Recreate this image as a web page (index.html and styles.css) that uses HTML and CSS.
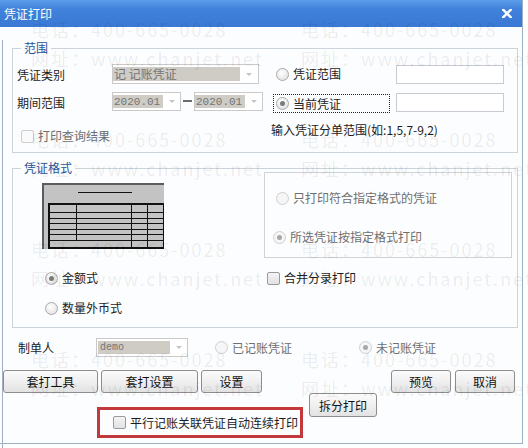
FILE: index.html
```html
<!DOCTYPE html>
<html lang="zh-CN">
<head>
    <meta charset="UTF-8">
    <title>凭证打印</title>
    <link rel="stylesheet" href="styles.css">
</head>
<body>
<div class="page">
    <div class="dialog">
        <div class="titlebar">
            <span class="title">凭证打印</span>
            <svg class="close" width="10" height="9" viewBox="0 0 10 9">
                <path d="M1 0.5 L9 8.5 M9 0.5 L1 8.5" stroke="#fff" stroke-width="2.4" stroke-linecap="square"/>
            </svg>
        </div>

        <div class="content">
            <fieldset class="group range">
                <legend>范围</legend>
                <div class="range-grid">
                    <span class="label">凭证类别</span>
                    <div class="select wide">
                        <span class="sel-text">记 记账凭证</span>
                        <span class="arrow"></span>
                    </div>
                    <div class="radio first"><span class="dot"></span>凭证范围</div>
                    <div class="input"></div>

                    <span class="label">期间范围</span>
                    <div class="dates">
                        <div class="select date">
                            <span class="sel-text mono">2020.01</span>
                            <span class="arrow"></span>
                        </div>
                        <span class="dash"></span>
                        <div class="select date">
                            <span class="sel-text mono">2020.01</span>
                            <span class="arrow"></span>
                        </div>
                    </div>
                    <div class="radio focus"><span class="dot checked"></span>当前凭证</div>
                    <div class="input"></div>

                    <div class="check disabled span2"><span class="box"></span>打印查询结果</div>
                    <span class="hint span2">输入凭证分单范围(如:1,5,7-9,2)</span>
                </div>
            </fieldset>

            <fieldset class="group format">
                <legend>凭证格式</legend>
                <div class="format-row">
                    <div class="format-left">
                        <div class="preview">
                            <div class="preview-title"></div>
                            <div class="preview-table">
                                <div class="pt-row"><span class="c1"></span><span class="c2"></span><span class="c3"></span><span class="c4"></span></div>
                                <div class="pt-row"><span class="c1"></span><span class="c2"></span><span class="c3"></span><span class="c4"></span></div>
                                <div class="pt-row"><span class="c1"></span><span class="c2"></span><span class="c3"></span><span class="c4"></span></div>
                                <div class="pt-row"><span class="c1"></span><span class="c2"></span><span class="c3"></span><span class="c4"></span></div>
                                <div class="pt-row"><span class="c1"></span><span class="c2"></span><span class="c3"></span><span class="c4"></span></div>
                                <div class="pt-row"><span class="c1"></span><span class="c2"></span><span class="c3"></span><span class="c4"></span></div>
                                <div class="pt-row last"><span class="c12"></span><span class="c3"></span><span class="c4"></span></div>
                            </div>
                        </div>
                        <div class="radio amount"><span class="dot checked"></span>金额式</div>
                        <div class="radio qty"><span class="dot"></span>数量外币式</div>
                    </div>
                    <div class="format-right">
                        <div class="inner-box">
                            <div class="radio disabled only"><span class="dot"></span>只打印符合指定格式的凭证</div>
                            <div class="radio disabled chosen"><span class="dot checked"></span>所选凭证按指定格式打印</div>
                        </div>
                        <div class="check merge"><span class="box"></span>合并分录打印</div>
                    </div>
                </div>
            </fieldset>

            <div class="maker-row">
                <span class="maker-label">制单人</span>
                <div class="select maker">
                    <span class="sel-text mono small">demo</span>
                    <span class="arrow"></span>
                </div>
                <div class="radio disabled posted"><span class="dot"></span>已记账凭证</div>
                <div class="radio disabled unposted"><span class="dot checked"></span>未记账凭证</div>
            </div>

            <div class="button-row">
                <button class="btn w95">套打工具</button>
                <button class="btn w97">套打设置</button>
                <button class="btn w61">设置</button>
                <span class="spacer"></span>
                <button class="btn w60">预览</button>
                <button class="btn w60">取消</button>
            </div>

            <div class="last-row">
                <div class="highlight">
                    <div class="check"><span class="box"></span>平行记账关联凭证自动连续打印</div>
                </div>
                <button class="btn split">拆分打印</button>
            </div>
        </div>
    </div>

    <!-- watermark from the screenshot -->
    <div class="watermark">
        <div class="wm"><p>电话：400-665-0028</p><p>网址：www.chanjet.net</p></div>
        <div class="wm"><p>电话：400-665-0028</p><p>网址：www.chanjet.net</p></div>
        <div class="wm"><p>电话：400-665-0028</p><p>网址：www.chanjet.net</p></div>
        <div class="wm"><p>电话：400-665-0028</p><p>网址：www.chanjet.net</p></div>
        <div class="wm"><p>电话：400-665-0028</p><p>网址：www.chanjet.net</p></div>
        <div class="wm"><p>电话：400-665-0028</p><p>网址：www.chanjet.net</p></div>
        <div class="wm"><p>电话：400-665-0028</p><p>网址：www.chanjet.net</p></div>
        <div class="wm"><p>电话：400-665-0028</p><p>网址：www.chanjet.net</p></div>
    </div>
</div>
</body>
</html>
```

FILE: styles.css
```css
html, body {
    margin: 0;
    padding: 0;
    background-color: #ffffff;
    font-family: "Noto Sans CJK SC", "Noto Sans", sans-serif;
    font-size: 12px;
    color: #1c1c1c;
}

.page {
    position: relative;
    width: 528px;
    height: 448px;
    overflow: hidden;
}

.dialog {
    box-sizing: border-box;
    width: 523px;
    height: 444px;
    margin-left: 0;
    border-right: 1px solid #9fb0c4;
    border-bottom: 1px solid #9fb0c4;
    background-color: #fcfdfe;
}

.titlebar {
    height: 27px;
    display: flex;
    align-items: center;
    justify-content: space-between;
    padding: 0 10px 0 4px;
    background: linear-gradient(#5e9deb, #3f81db 35%, #3a79d4);
    color: #ffffff;
    line-height: 16px;
}

.titlebar .close {
    margin-top: -1px;
}

.content {
    border-left: 1px solid #9fb0c4;
    margin-left: 2px;
    height: 416px;
}

/* group boxes */
.group {
    box-sizing: border-box;
    width: 506px;
    margin: 0 0 0 9px;
    border: 1px solid #cbd3db;
    min-width: 0;
}

.group legend {
    margin-left: 4px;
    padding: 0 3px;
    line-height: 16px;
    color: #2a549a;
}

.range {
    margin-top: 13px;
    padding: 8px 0 8px 4px;
}

.range-grid {
    display: grid;
    grid-template-columns: 95px 160px 124px 108px;
    grid-template-rows: 20px 20px 24px;
    row-gap: 8px;
    align-items: center;
}

.label {
    line-height: 16px;
    margin-top: 2px;
}

.span2 {
    grid-column: span 2;
}

/* disabled combo boxes */
.select {
    box-sizing: border-box;
    display: flex;
    align-items: stretch;
    height: 20px;
    padding: 2px 0;
    border: 1px solid #cacaca;
    background-color: #ffffff;
}

.select .sel-text {
    background-color: #cfccc6;
    color: #747474;
    line-height: 14px;
    padding-left: 1px;
    white-space: nowrap;
    overflow: hidden;
}

.select .arrow {
    flex: 1;
    display: flex;
    align-items: center;
    justify-content: center;
}

.select .arrow::after {
    content: "";
    border-left: 3px solid transparent;
    border-right: 3px solid transparent;
    border-top: 3px solid #c4c4c4;
}

.select.wide {
    width: 147px;
}

.select.wide .sel-text {
    width: 126px;
}

.dates {
    display: flex;
    align-items: center;
    margin-top: -2px;
}

.select.date {
    width: 69px;
    height: 19px;
}

.select.date .sel-text {
    width: 49px;
}

.mono {
    font-family: "Liberation Mono", monospace;
    font-size: 11px;
}

.mono.small {
    font-size: 10px;
}

.dash {
    width: 9px;
    height: 2px;
    margin: 0 2px 0 2px;
    background-color: #6c6c6c;
}

.input {
    box-sizing: border-box;
    height: 19px;
    width: 108px;
    border: 1px solid #c7ccd2;
    background-color: #ffffff;
}

/* radio buttons and check boxes */
.radio, .check {
    display: flex;
    align-items: center;
    height: 16px;
    line-height: 16px;
    white-space: nowrap;
}

.radio .dot {
    box-sizing: border-box;
    width: 13px;
    height: 13px;
    margin-right: 4px;
    border: 1px solid #a9a9a9;
    border-radius: 50%;
    background: radial-gradient(circle at 40% 35%, #ffffff, #e6e6e6 70%, #d4d4d4);
    display: flex;
    align-items: center;
    justify-content: center;
}

.radio .dot.checked::after {
    content: "";
    width: 5px;
    height: 5px;
    border-radius: 50%;
    background-color: #7a7a7a;
}

.radio.disabled {
    color: #6f6f6f;
}

.radio.disabled .dot {
    border-color: #cfcfcf;
    background: #f6f6f6;
}

.radio.disabled .dot.checked::after {
    background-color: #a8a8a8;
}

.radio.first {
    padding-left: 4px;
}

.radio.focus {
    box-sizing: border-box;
    height: 19px;
    width: 117px;
    margin: 3px 0 0 1px;
    padding-left: 2px;
    border: 1px dotted #222222;
}

.check .box {
    box-sizing: border-box;
    width: 13px;
    height: 13px;
    margin-right: 4px;
    border: 1px solid #9a9a9a;
    border-radius: 2px;
    background: linear-gradient(#f4f4f4, #e2e2e2);
}

.check.disabled {
    color: #6f6f6f;
    align-self: end;
    margin-left: 4px;
}

.check.disabled .box {
    border-color: #cdcdcd;
    background: #fafafa;
}

.hint {
    align-self: start;
    margin-left: -1px;
    line-height: 18px;
    margin-top: 1px;
}

/* voucher format group */
.format {
    margin-top: 7px;
    padding: 0 0 11px 4px;
}

.format-row {
    display: flex;
}

.format-left {
    width: 247px;
}

.preview {
    box-sizing: border-box;
    width: 122px;
    height: 66px;
    margin: 7px 0 0 25px;
    padding: 7px 0 0 4px;
    border-top: 2px solid #5c5c5c;
    border-left: 2px solid #5c5c5c;
    background-color: #c3c3c3;
}

.preview-title {
    width: 54px;
    height: 1px;
    margin-left: 30px;
    background-color: #111111;
}

.preview-table {
    box-sizing: border-box;
    width: 116px;
    height: 46px;
    margin-top: 10px;
    border: 2px solid #111111;
    border-right-width: 1px;
    display: flex;
    flex-direction: column;
}

.pt-row {
    flex: 1;
    display: flex;
    border-bottom: 1px solid #111111;
}

.pt-row:first-child {
    flex: 1.5;
}

.pt-row.last {
    border-bottom: none;
    flex: 1.3;
}

.pt-row span {
    border-right: 1px solid #111111;
}

.pt-row .c1 { width: 26px; }
.pt-row .c2 { width: 54px; }
.pt-row .c12 { width: 81px; }
.pt-row .c3 { width: 15px; }
.pt-row .c4 { flex: 1; border-right: none; }

.radio.amount {
    margin: 21px 0 0 28px;
}

.radio.qty {
    margin: 14px 0 0 28px;
}

.format-right {
    width: 248px;
}

.inner-box {
    box-sizing: border-box;
    height: 86px;
    margin-top: -4px;
    padding-top: 17px;
    border: 1px solid #cfd3d7;
}

.radio.only {
    margin-left: 11px;
}

.radio.chosen {
    margin: 23px 0 0 8px;
}

.check.merge {
    margin: 12px 0 0 3px;
}

/* bottom rows */
.maker-row {
    display: flex;
    align-items: center;
    height: 19px;
    margin-top: 10px;
    padding-left: 15px;
}

.maker-label {
    width: 78px;
}

.select.maker {
    width: 92px;
    height: 19px;
}

.select.maker .sel-text {
    width: 70px;
    padding-left: 2px;
    margin-left: 1px;
}

.radio.posted {
    margin-left: 27px;
}

.radio.unposted {
    margin-left: 67px;
}

.button-row {
    display: flex;
    gap: 3px;
    margin-top: 13px;
    padding-right: 7px;
}

.spacer {
    flex: 1;
}

.btn {
    box-sizing: border-box;
    height: 23px;
    padding: 0;
    border: 1px solid #8d8d8d;
    border-radius: 3px;
    background: linear-gradient(#fbfbfb, #f0f0f0 50%, #e2e2e2);
    font-family: "Noto Sans CJK SC", "Noto Sans", sans-serif;
    font-size: 12px;
    color: #111111;
}

.btn.w95 { width: 95px; }
.btn.w97 { width: 97px; }
.btn.w61 { width: 61px; }
.btn.w60 { width: 60px; }

.button-row .btn.w60:last-child {
    margin-left: 1px;
}

.last-row {
    display: flex;
    align-items: flex-start;
}

.highlight {
    box-sizing: border-box;
    width: 206px;
    height: 31px;
    margin: 14px 0 0 94px;
    padding-left: 13px;
    border: 3px solid #c3393b;
    display: flex;
    align-items: center;
}

.btn.split {
    width: 68px;
    height: 24px;
    margin-left: 6px;
}

/* faint watermark lying over the whole dialog */
.watermark {
    position: absolute;
    left: 0;
    top: 0;
    width: 528px;
    padding: 15px 0 0 31px;
    display: grid;
    grid-template-columns: 270px 220px;
    grid-auto-rows: 110px;
    pointer-events: none;
}

.wm p {
    margin: 0;
    font-family: "Noto Sans CJK SC", sans-serif;
    font-size: 18px;
    letter-spacing: 2px;
    line-height: 29px;
    color: rgba(0, 0, 0, 0.075);
    white-space: nowrap;
}
```
